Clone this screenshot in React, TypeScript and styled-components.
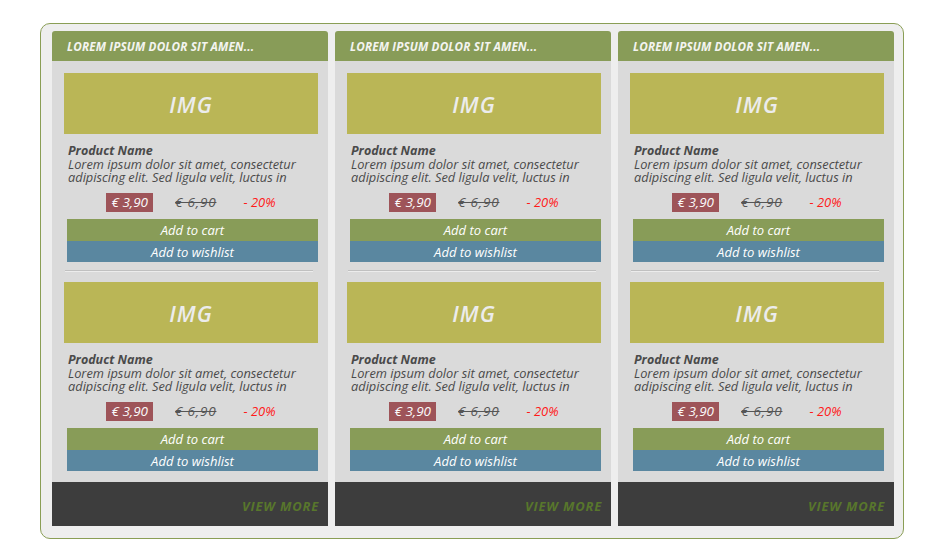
import React from "react";
import styled, { createGlobalStyle } from "styled-components";

const Global = createGlobalStyle`
  html, body { margin: 0; padding: 0; background: #ffffff; }
  body { font-family: "Open Sans", "DejaVu Sans", sans-serif; }
`;

const Page = styled.div`
  width: 940px;
  height: 558px;
  padding: 23px 0 0 40px;
  box-sizing: border-box;
`;

const Frame = styled.div`
  width: 864px;
  height: 516px;
  box-sizing: border-box;
  border: 1px solid #8a9e55;
  border-radius: 10px;
  background: #eeeeee;
  padding: 7px 8px 0 11px;
  display: flex;
  gap: 7px;
`;

const Column = styled.div`
  width: 276px;
  display: flex;
  flex-direction: column;
`;

const Header = styled.div`
  height: 30px;
  background: #889c58;
  border-radius: 3px 3px 0 0;
  display: flex;
  align-items: center;
  padding-left: 15px;
  color: #f4f4f0;
  font-size: 11.7px;
  font-weight: 700;
  font-style: italic;
  text-transform: uppercase;
  letter-spacing: 0.15px;
`;

const Body = styled.div`
  background: #dadada;
  padding: 12px 10px 11px 12px;
  display: flex;
  flex-direction: column;
`;

const Product = styled.div`
  display: flex;
  flex-direction: column;
`;

const Img = styled.div`
  height: 61px;
  background: #bab656;
  display: flex;
  align-items: center;
  justify-content: center;
  color: #ececec;
  font-size: 22px;
  font-weight: 600;
  font-style: italic;
  letter-spacing: 1px;
`;

const Info = styled.div`
  padding: 10px 0 0 4px;
  color: #4a4a4a;
  font-style: italic;
  font-size: 12.8px;
`;

const Name = styled.div`
  font-weight: 700;
  font-size: 12.5px;
  line-height: 14px;
`;

const Desc = styled.div`
  line-height: 13px;
  width: 250px;
`;

const PriceRow = styled.div`
  display: flex;
  justify-content: center;
  align-items: center;
  margin-top: 9px;
  height: 19px;
  font-style: italic;
  font-size: 13.5px;
  line-height: 19px;
`;

const Price = styled.span`
  background: #9e5459;
  color: #fafafa;
  height: 19px;
  padding: 0 5px;
`;

const OldPrice = styled.span`
  color: #555555;
  text-decoration: line-through;
  letter-spacing: 0.8px;
  margin-left: 22px;
`;

const Discount = styled.span`
  color: #ff1a1a;
  margin-left: 27px;
  font-size: 13px;
`;

const Button = styled.div<{ $bg: string; $h: number }>`
  margin-left: 3px;
  height: ${(p) => p.$h}px;
  background: ${(p) => p.$bg};
  color: #ffffff;
  font-style: italic;
  font-size: 13px;
  display: flex;
  align-items: center;
  justify-content: center;
`;

const Buttons = styled.div`
  margin-top: 7px;
  display: flex;
  flex-direction: column;
`;

const Divider = styled.div`
  height: 1px;
  background: #c0c0c0;
  border-bottom: 1px solid #ececec;
  margin: 8px 5px 10px 1px;
`;

const Footer = styled.div`
  height: 44px;
  background: #3d3d3d;
  display: flex;
  align-items: center;
  justify-content: flex-end;
  padding: 3px 9px 0 0;
  box-sizing: border-box;
  color: #58762c;
  font-size: 13px;
  font-weight: 700;
  font-style: italic;
  letter-spacing: 0.8px;
`;

const ProductCard = () => (
  <Product>
    <Img>IMG</Img>
    <Info>
      <Name>Product Name</Name>
      <Desc>
        Lorem ipsum dolor sit amet, consectetur adipiscing elit. Sed ligula velit, luctus in
      </Desc>
    </Info>
    <PriceRow>
      <Price>€ 3,90</Price>
      <OldPrice>€ 6,90</OldPrice>
      <Discount>- 20%</Discount>
    </PriceRow>
    <Buttons>
      <Button $bg="#889c58" $h={22}>Add to cart</Button>
      <Button $bg="#5a87a0" $h={21}>Add to wishlist</Button>
    </Buttons>
  </Product>
);

const Col = () => (
  <Column>
    <Header>Lorem ipsum dolor sit amen...</Header>
    <Body>
      <ProductCard />
      <Divider />
      <ProductCard />
    </Body>
    <Footer>VIEW MORE</Footer>
  </Column>
);

export default function App() {
  return (
    <Page>
      <Global />
      <Frame>
        <Col />
        <Col />
        <Col />
      </Frame>
    </Page>
  );
}
